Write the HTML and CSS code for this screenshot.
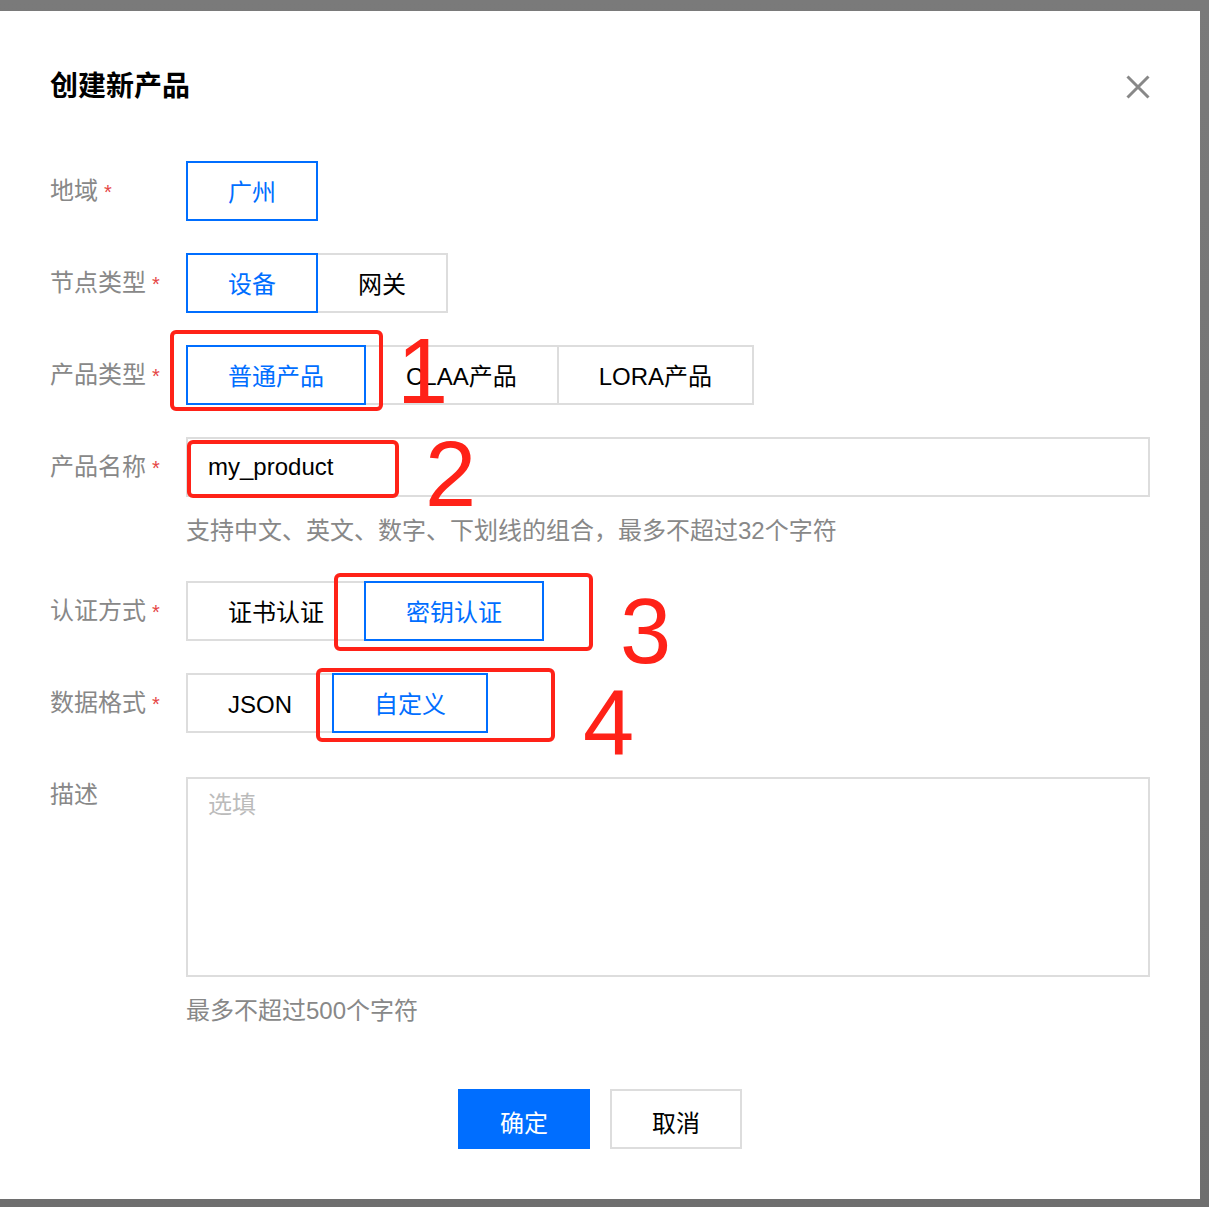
FILE: index.html
```html
<!DOCTYPE html>
<html lang="zh-CN">
<head>
<meta charset="utf-8">
<title>创建新产品</title>
<link rel="stylesheet" href="styles.css">
</head>
<body>
<div class="backdrop">
  <div class="modal">
    <div class="header">
      <h1 class="title">创建新产品</h1>
      <button class="close" aria-label="关闭">
        <svg width="24" height="24" viewBox="0 0 24 24"><path d="M1.5 1.5 L22.5 22.5 M22.5 1.5 L1.5 22.5" stroke="#888" stroke-width="3" fill="none"/></svg>
      </button>
    </div>

    <div class="form">
      <div class="row">
        <div class="label">地域<span class="req">*</span></div>
        <div class="control">
          <div class="seg"><span class="seg-btn active">广州</span></div>
        </div>
      </div>

      <div class="row">
        <div class="label">节点类型<span class="req">*</span></div>
        <div class="control">
          <div class="seg"><span class="seg-btn active">设备</span><span class="seg-btn">网关</span></div>
        </div>
      </div>

      <div class="row">
        <div class="label">产品类型<span class="req">*</span></div>
        <div class="control">
          <div class="seg"><span class="seg-btn active">普通产品</span><span class="seg-btn">CLAA产品</span><span class="seg-btn">LORA产品</span></div>
        </div>
      </div>

      <div class="row">
        <div class="label">产品名称<span class="req">*</span></div>
        <div class="control">
          <input class="input" type="text" value="my_product">
          <div class="hint">支持中文、英文、数字、下划线的组合，最多不超过32个字符</div>
        </div>
      </div>

      <div class="row">
        <div class="label">认证方式<span class="req">*</span></div>
        <div class="control">
          <div class="seg"><span class="seg-btn">证书认证</span><span class="seg-btn active">密钥认证</span></div>
        </div>
      </div>

      <div class="row row-before-desc">
        <div class="label">数据格式<span class="req">*</span></div>
        <div class="control">
          <div class="seg"><span class="seg-btn">JSON</span><span class="seg-btn active">自定义</span></div>
        </div>
      </div>

      <div class="row row-last">
        <div class="label label-top">描述</div>
        <div class="control">
          <textarea class="textarea" placeholder="选填"></textarea>
          <div class="hint">最多不超过500个字符</div>
        </div>
      </div>
    </div>

    <div class="footer">
      <button class="btn btn-primary">确定</button>
      <button class="btn">取消</button>
    </div>

    <div class="mark mark-1"></div>
    <div class="mark mark-2"></div>
    <div class="mark mark-3"></div>
    <div class="mark mark-4"></div>
    <span class="num num-1">1</span>
    <span class="num num-2">2</span>
    <span class="num num-3">3</span>
    <span class="num num-4">4</span>
  </div>
</div>
</body>
</html>
```
FILE: styles.css
```css
* { box-sizing: border-box; }

html, body {
  margin: 0;
  padding: 0;
  height: 1207px;
  overflow: hidden;
  background: #767676;
}

body {
  font-family: "Liberation Sans", "Noto Sans CJK SC", sans-serif;
  font-size: 24px;
  color: #000;
}

.backdrop {
  padding-top: 11px;
  height: 1207px;
  background: linear-gradient(#7a7a7a, #6e6e6e);
}

.modal {
  position: relative;
  width: 1200px;
  height: 1188px;
  background: #fff;
  padding: 56px 50px 0 50px;
}

.header {
  display: flex;
  justify-content: space-between;
  align-items: center;
  height: 40px;
}

.title {
  margin: 0;
  font-size: 28px;
  line-height: 40px;
  font-weight: bold;
  color: #000;
}

.close {
  border: 0;
  padding: 0;
  background: transparent;
  width: 24px;
  height: 24px;
  display: block;
}
.close svg { display: block; }

.form {
  margin-top: 54px;
}

.row {
  display: flex;
  margin-bottom: 32px;
}
.row-before-desc { margin-bottom: 44px; }
.row-last { margin-bottom: 0; }

.label {
  width: 136px;
  flex: none;
  height: 60px;
  line-height: 60px;
  color: #888;
  white-space: nowrap;
}
.label-top {
  height: 36px;
  line-height: 36px;
}

.req {
  color: #e54545;
  font-size: 20px;
  margin-left: 6px;
}

.control {
  flex: 1;
  min-width: 0;
}

.seg {
  display: flex;
}

.seg-btn {
  display: block;
  height: 60px;
  line-height: 52px;
  padding: 4px 40px 0 40px;
  border: 2px solid #ddd;
  background: #fff;
  color: #000;
  white-space: nowrap;
}
.seg-btn + .seg-btn { margin-left: -2px; }
.seg-btn.active {
  position: relative;
  z-index: 1;
  border-color: #006eff;
  color: #006eff;
}

.input {
  display: block;
  width: 100%;
  height: 60px;
  border: 2px solid #ddd;
  padding: 0 20px;
  font-family: "Liberation Sans", "Noto Sans CJK SC", sans-serif;
  font-size: 24px;
  color: #000;
  outline: none;
  background: #fff;
}

.hint {
  margin-top: 16px;
  line-height: 36px;
  color: #888;
}

.textarea {
  display: block;
  width: 100%;
  height: 200px;
  border: 2px solid #ddd;
  padding: 8px 20px;
  font-family: "Liberation Sans", "Noto Sans CJK SC", sans-serif;
  font-size: 24px;
  line-height: 36px;
  resize: none;
  outline: none;
  color: #000;
}
.textarea::placeholder { color: #bbb; }

.footer {
  margin-top: 60px;
  display: flex;
  justify-content: center;
  gap: 20px;
}

.btn {
  width: 132px;
  height: 60px;
  border: 2px solid #ddd;
  background: #fff;
  color: #000;
  font-family: "Liberation Sans", "Noto Sans CJK SC", sans-serif;
  font-size: 24px;
  padding: 4px 0 0 0;
}
.btn-primary {
  background: #006eff;
  border-color: #006eff;
  color: #fff;
}

/* red annotation overlays */
.mark {
  position: absolute;
  border: 4px solid #ff2218;
  border-radius: 6px;
  z-index: 5;
}
.mark-1 { left: 170px; top: 319px; width: 213px; height: 81px; }
.mark-2 { left: 187px; top: 429px; width: 212px; height: 58px; }
.mark-3 { left: 334px; top: 562px; width: 259px; height: 78px; }
.mark-4 { left: 316px; top: 657px; width: 239px; height: 74px; }

.num {
  position: absolute;
  z-index: 6;
  font-family: "Liberation Sans", sans-serif;
  font-size: 92px;
  line-height: 1;
  color: #ff2218;
}
.num-1 { left: 397px; top: 314px; }
.num-2 { left: 425px; top: 417px; }
.num-3 { left: 620px; top: 574px; }
.num-4 { left: 583px; top: 665px; }
```
